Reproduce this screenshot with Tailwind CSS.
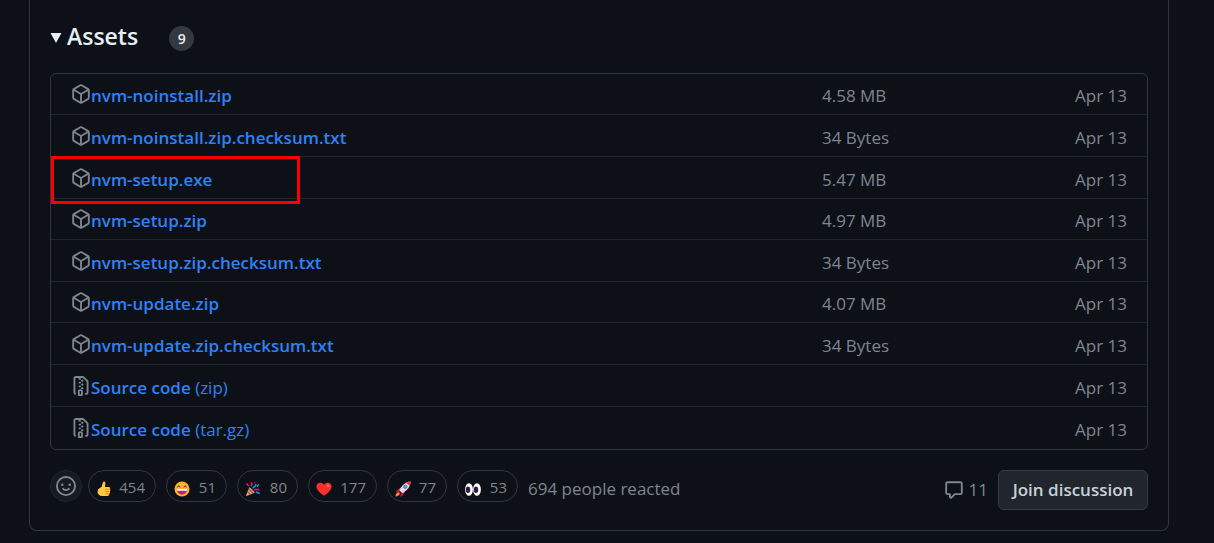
<!DOCTYPE html>
<html lang="en">
<head>
<meta charset="utf-8">
<title>Release assets</title>
<script src="https://cdn.jsdelivr.net/npm/@tailwindcss/browser@4"></script>
</head>
<body class="min-h-screen bg-[#0d1117] font-['Open_Sans','Noto_Sans',sans-serif] text-[17px] leading-6 text-[#7d8590]">
<svg class="hidden" aria-hidden="true">
  <symbol id="package" viewBox="0 0 16 16"><path d="m8.878.392 5.25 3.045c.54.314.872.89.872 1.514v6.098a1.75 1.75 0 0 1-.872 1.514l-5.25 3.045a1.75 1.75 0 0 1-1.756 0l-5.25-3.045A1.75 1.75 0 0 1 1 11.049V4.951c0-.624.332-1.201.872-1.514L7.122.392a1.75 1.75 0 0 1 1.756 0ZM7.875 1.69l-4.63 2.685L8 7.133l4.755-2.758-4.63-2.685a.248.248 0 0 0-.25 0ZM2.5 5.677v5.372c0 .09.047.171.125.216l4.625 2.683V8.432Zm6.25 8.271 4.625-2.683a.25.25 0 0 0 .125-.216V5.677L8.75 8.432Z"/></symbol>
  <symbol id="zip" viewBox="0 0 16 16"><path d="M3.5 1.75v11.5c0 .09.048.173.126.217a.75.75 0 0 1-.752 1.298A1.748 1.748 0 0 1 2 13.25V1.75C2 .784 2.784 0 3.75 0h5.586c.464 0 .909.185 1.237.513l2.914 2.914c.329.328.513.773.513 1.237v8.586A1.75 1.75 0 0 1 12.25 15h-.5a.75.75 0 0 1 0-1.5h.5a.25.25 0 0 0 .25-.25V4.664a.25.25 0 0 0-.073-.177L9.513 1.573a.25.25 0 0 0-.177-.073H7.25a.75.75 0 0 1 0 1.5h-.5a.75.75 0 0 1-.75-.75V1.5H3.75a.25.25 0 0 0-.25.25Zm3.75 8.75h.5c.966 0 1.75.784 1.75 1.75v3a.75.75 0 0 1-.75.75h-2.5a.75.75 0 0 1-.75-.75v-3c0-.966.784-1.75 1.75-1.75ZM6 5.25a.75.75 0 0 1 .75-.75h.5a.75.75 0 0 1 0 1.5h-.5A.75.75 0 0 1 6 5.25Zm.75 2.25h.5a.75.75 0 0 1 0 1.5h-.5a.75.75 0 0 1 0-1.5ZM8 6.75A.75.75 0 0 1 8.75 6h.5a.75.75 0 0 1 0 1.5h-.5A.75.75 0 0 1 8 6.75ZM8.75 3h.5a.75.75 0 0 1 0 1.5h-.5a.75.75 0 0 1 0-1.5ZM8 9.75A.75.75 0 0 1 8.75 9h.5a.75.75 0 0 1 0 1.5h-.5A.75.75 0 0 1 8 9.75Zm-1 2.5v2.25h1v-2.25a.25.25 0 0 0-.25-.25h-.5a.25.25 0 0 0-.25.25Z"/></symbol>
</svg>
<main class="ml-[29px] mr-[45px] rounded-b-lg border border-t-0 border-[#30363d] px-5 pb-5">
  <header class="flex items-center pt-[21px]">
    <svg class="mr-[5px] mt-1 h-[10px] w-3 fill-[#e6edf3]" viewBox="0 0 12 10"><path d="M.5 0h11L6 10z"/></svg>
    <h2 class="text-[23px] font-semibold text-[#e6edf3]">Assets</h2>
    <span class="ml-[31px] mt-[5px] flex size-[25px] items-center justify-center rounded-full bg-[#343941] text-[14px] font-semibold text-[#e6edf3]">9</span>
  </header>
  <div class="mt-[22px] rounded-md border border-[#30363d]">
    <table class="w-full table-fixed border-separate border-spacing-0 [&_td]:px-0 [&_td]:pt-1 [&_td]:pb-0 [&_td]:border-[#21262d] [&_tr:not(:last-child)_td]:border-b [&_a]:text-[#2f81f7] [&_a]:font-semibold [&_svg]:fill-[#7d8590] [&_svg]:size-5 [&_svg]:shrink-0 [&_svg]:mb-1">
      <colgroup><col><col class="w-[154px]"><col class="w-[171px]"></colgroup>
      <tbody>
        <tr class="h-[41px]"><td><div class="flex items-center pl-5"><svg><use href="#package"/></svg><a href="#">nvm-noinstall.zip</a></div></td><td>4.58 MB</td><td class="pr-5! text-right">Apr 13</td></tr>
        <tr class="h-[42px]"><td><div class="flex items-center pl-5"><svg><use href="#package"/></svg><a href="#">nvm-noinstall.zip.checksum.txt</a></div></td><td>34 Bytes</td><td class="pr-5! text-right">Apr 13</td></tr>
        <tr class="h-[42px]"><td class="relative"><div class="flex items-center pl-5"><svg><use href="#package"/></svg><a href="#">nvm-setup.exe</a></div><span class="pointer-events-none absolute -top-px left-0 h-12 w-[249px] border-3 border-[#fa0000]"></span></td><td>5.47 MB</td><td class="pr-5! text-right">Apr 13</td></tr>
        <tr class="h-[41px]"><td><div class="flex items-center pl-5"><svg><use href="#package"/></svg><a href="#">nvm-setup.zip</a></div></td><td>4.97 MB</td><td class="pr-5! text-right">Apr 13</td></tr>
        <tr class="h-[42px]"><td><div class="flex items-center pl-5"><svg><use href="#package"/></svg><a href="#">nvm-setup.zip.checksum.txt</a></div></td><td>34 Bytes</td><td class="pr-5! text-right">Apr 13</td></tr>
        <tr class="h-[41px]"><td><div class="flex items-center pl-5"><svg><use href="#package"/></svg><a href="#">nvm-update.zip</a></div></td><td>4.07 MB</td><td class="pr-5! text-right">Apr 13</td></tr>
        <tr class="h-[42px]"><td><div class="flex items-center pl-5"><svg><use href="#package"/></svg><a href="#">nvm-update.zip.checksum.txt</a></div></td><td>34 Bytes</td><td class="pr-5! text-right">Apr 13</td></tr>
        <tr class="h-[42px]"><td><div class="flex items-center pl-5"><svg><use href="#zip"/></svg><a href="#">Source code <span class="font-normal">(zip)</span></a></div></td><td></td><td class="pr-5! text-right">Apr 13</td></tr>
        <tr class="h-[42px]"><td><div class="flex items-center pl-5"><svg><use href="#zip"/></svg><a href="#">Source code <span class="font-normal">(tar.gz)</span></a></div></td><td></td><td class="pr-5! text-right">Apr 13</td></tr>
      </tbody>
    </table>
  </div>
  <footer class="mt-5 flex items-start">
    <button aria-label="Add reaction" class="mr-[6px] flex size-8 items-center justify-center rounded-full border border-[#21262d] bg-[#161b22]">
      <svg class="size-5 fill-[#7d8590]" viewBox="0 0 16 16"><path d="M8 0a8 8 0 1 1 0 16A8 8 0 0 1 8 0ZM1.5 8a6.5 6.5 0 1 0 13 0 6.5 6.5 0 0 0-13 0Zm3.82 1.636a.75.75 0 0 1 1.038.175l.007.009c.103.118.22.222.35.31.264.178.683.37 1.285.37.602 0 1.02-.192 1.285-.371.13-.088.247-.192.35-.31l.007-.008a.75.75 0 0 1 1.222.87l-.022-.015c.02.013.021.015.021.015v.001l-.001.002-.002.003-.005.007-.014.019a2.066 2.066 0 0 1-.184.213c-.16.166-.338.316-.53.445-.63.418-1.37.638-2.127.629-.946 0-1.652-.308-2.126-.63a3.331 3.331 0 0 1-.715-.657l-.014-.02-.005-.006-.002-.003v-.002h-.001l.613-.432-.614.43a.75.75 0 0 1 .183-1.044ZM12 7a1 1 0 1 1-2 0 1 1 0 0 1 2 0ZM5 8a1 1 0 1 1 0-2 1 1 0 0 1 0 2Z"/></svg>
    </button>
    <div class="flex gap-[10px] text-[15px] [&_button]:flex [&_button]:h-8 [&_button]:items-center [&_button]:justify-between [&_button]:rounded-full [&_button]:border [&_button]:border-[#30363d] [&_button]:pl-[7px] [&_button]:pr-[10px] [&_button]:pt-[2px] [&_svg]:mt-[3px] [&_svg]:size-4">
      <button class="w-[68px]"><svg viewBox="0 0 16 16"><path fill="#ffc83d" d="M2.2 8.2 5.6 5.8 7 1.3C7.3.2 9.4.4 9.4 2.2L9 6h3.7c1.7 0 1.9 1.7 1.1 2.3.8.6.7 1.8-.1 2.3.6.7.3 1.9-.5 2.2.3 1-.4 2.2-1.8 2.2H6.3C3.4 15 1.5 13.3 1.5 10.8Z"/><path fill="none" stroke="#d67d00" stroke-width=".7" d="M9 8.3h4.500M9 10.500h4.400M9 12.800h4"/></svg>454</button>
      <button class="w-[61px]"><svg viewBox="0 0 16 16"><circle cx="8" cy="8" r="7.5" fill="#ffb02e"/><path fill="#bb1d80" d="M3 8h10c0 3.3-2 5.500-5 5.500S3 11.300 3 8Z"/><path fill="#fff" d="M3 8h10l-.2 1.700H3.200Z"/><path fill="none" stroke="#402a32" stroke-linecap="round" d="M3.500 6c.4-1.500 2-1.500 2.500 0M10 6c.4-1.500 2-1.500 2.500 0"/></svg>51</button>
      <button class="w-[61px]"><svg viewBox="0 0 16 16"><path fill="#ffb02e" d="m4.500 6 5.500 5.500L.8 15.200Z"/><path stroke="#6d4bc0" stroke-width="1.300" d="m3.800 8 4.400 4.300M2.600 10.800l3 2.800"/><g fill="none" stroke-width="1.500"><path stroke="#f70a8d" d="M1.500 2.500 3.800 5M6 1.300c1.400 1 1.200 2.600 0 4M9 9c2-1.500 3 .5 5-1"/><path stroke="#00a6ed" d="M8 7.500c.3-2.500 2.800-1 3-4.500M11 11l3.800 1.500M14 3.500l-2 2"/><path stroke="#ca0b4a" d="m9.300 1.200 1 1M12 8.500l2.500 1"/></g></svg>80</button>
      <button class="w-[69px]"><svg viewBox="0 0 16 16"><path fill="#f8312f" d="M8 14.800C4.500 12 .4 9 .4 5.400.4 1.600 5.600.2 8 3.700c2.400-3.500 7.600-2.100 7.600 1.700C15.600 9 11.500 12 8 14.800Z"/><ellipse cx="12.200" cy="4.700" rx="1.600" ry="1.200" transform="rotate(35 12.200 4.700)" fill="#f37366"/></svg>177</button>
      <button class="w-[60px]"><svg viewBox="0 0 16 16"><path fill="#ca0b4a" d="m5 7-3.700 2.800L1 12l4-1.500 1.500 1.300L5 15.800l2.500-.8L10 11Z"/><path fill="#e1d8ec" d="M15.500.5c.2 4.500-3 9-8 11.700L4.300 9.300C6.500 4.500 10.500.8 15.500.5Z"/><path fill="#f8312f" d="M15.500.5c0 1.700-.3 3-1 4.300L11 1.700C12.500.9 14 .5 15.500.5Z"/><circle cx="10.300" cy="5.800" r="1.800" fill="#46a4fb" stroke="#636363" stroke-width=".6"/><path fill="#ff822d" d="M3.600 11 5 12.500C4.500 14.500 2.500 15.500.4 15.600.5 13.500 1.500 11.500 3.600 11Z"/></svg>77</button>
      <button class="w-[61px]"><svg viewBox="0 0 16 16"><ellipse cx="4" cy="8.500" rx="3.900" ry="6.300" fill="#fff"/><ellipse cx="12" cy="8.500" rx="3.900" ry="6.300" fill="#fff"/><ellipse cx="3" cy="8.700" rx="2.200" ry="3.300" fill="#321b41"/><ellipse cx="11" cy="8.700" rx="2.200" ry="3.300" fill="#321b41"/></svg>53</button>
    </div>
    <span class="ml-[10px] mt-[7px]">694 people reacted</span>
    <a href="#" class="ml-auto mr-[10px] mt-2 flex items-center gap-[5px]"><svg class="size-5 fill-[#7d8590]" viewBox="0 0 16 16"><path d="M1 2.750C1 1.784 1.784 1 2.750 1h10.500c.966 0 1.750.784 1.750 1.750v7.500A1.750 1.750 0 0 1 13.250 12H9.060l-2.573 2.573A1.458 1.458 0 0 1 4 13.543V12H2.750A1.750 1.750 0 0 1 1 10.250Zm1.750-.25a.25.25 0 0 0-.25.25v7.500c0 .138.112.25.25.25h2a.75.75 0 0 1 .75.75v2.190l2.720-2.720a.749.749 0 0 1 .53-.22h4.500a.25.25 0 0 0 .25-.25v-7.500a.25.25 0 0 0-.25-.25Z"/></svg>11</a>
    <button class="h-10 w-[150px] rounded-md border border-[#363b42] bg-[#21262d] text-[17px] font-semibold text-[#c9d1d9]">Join discussion</button>
  </footer>
</main>
</body>
</html>
